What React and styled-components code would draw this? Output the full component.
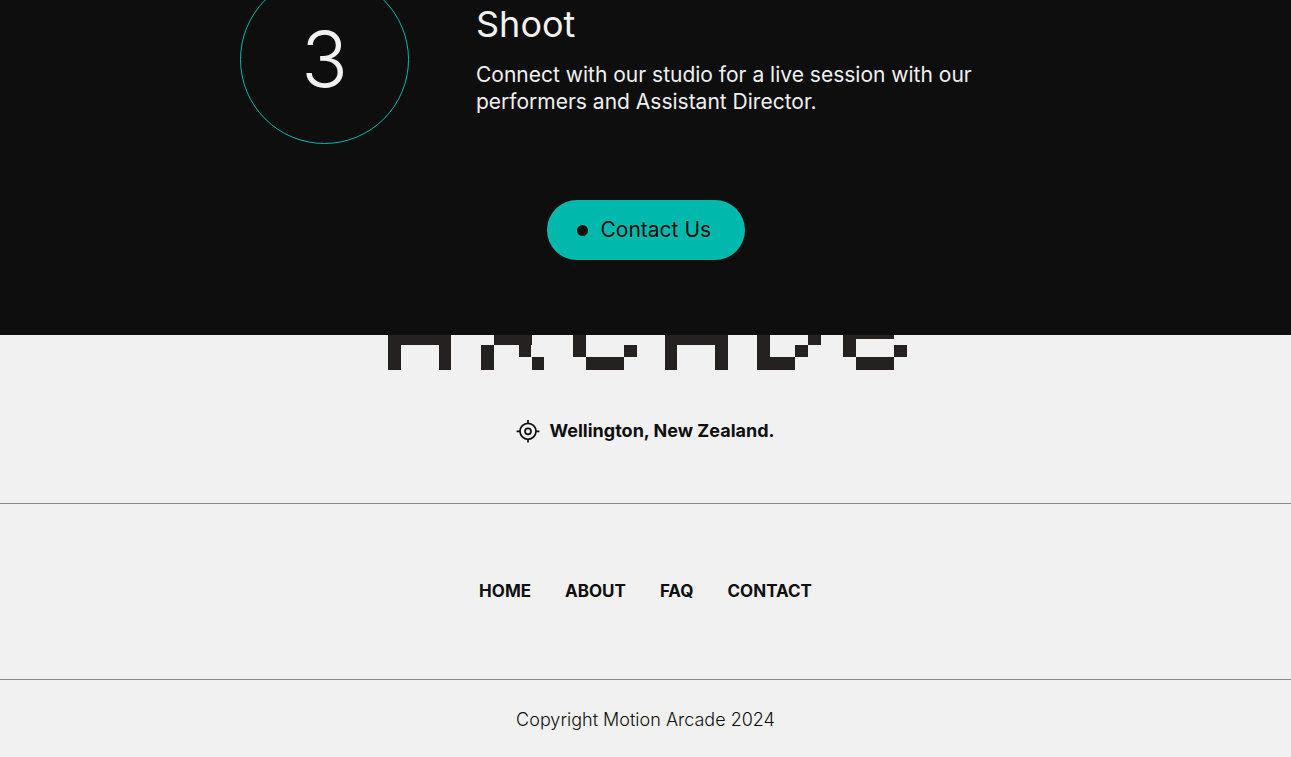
import React from "react";
import styled, { createGlobalStyle } from "styled-components";

const GlobalStyle = createGlobalStyle`
  *, *::before, *::after { box-sizing: border-box; }
  body {
    margin: 0;
    background: #f1f1f1;
    color: #0e0e0e;
    font-family: Inter, "Liberation Sans", sans-serif;
  }
`;

const Process = styled.section`
  background: #0e0e0e;
  color: #f1f1f1;
  padding: 0 24px 75px;
  display: flex;
  flex-direction: column;
  align-items: center;
  gap: 56px;
`;

const Step = styled.article`
  display: flex;
  align-items: center;
  gap: 67px;
  width: 100%;
  max-width: 811px;
  margin-top: -25px;
`;

const StepNumber = styled.div`
  flex: none;
  display: grid;
  place-items: center;
  width: 169px;
  height: 169px;
  border: 1px solid #00b8ac;
  border-radius: 50%;
  font-size: 77px;
  font-weight: 300;
  line-height: 1;
`;

const StepBody = styled.div`
  flex: 1;
  max-width: 520px;
  padding-bottom: 2px;
`;

const StepTitle = styled.h2`
  margin: 0 0 16px;
  font-size: 36px;
  font-weight: 400;
  line-height: 42px;
`;

const StepText = styled.p`
  margin: 0;
  font-size: 21px;
  line-height: 27px;
`;

const ContactButton = styled.button`
  display: flex;
  align-items: center;
  gap: 13px;
  min-width: 198px;
  height: 60px;
  padding: 0 30px;
  border: 0;
  border-radius: 30px;
  background: #00b8ac;
  color: #0e0e0e;
  font: 400 21px/28px Inter, "Liberation Sans", sans-serif;
  cursor: pointer;
`;

const Dot = styled.span`
  width: 11px;
  height: 11px;
  border-radius: 50%;
  background: #0e0e0e;
`;

const FooterRow = styled.div`
  display: flex;
  flex-direction: column;
  align-items: center;
  padding: ${(p) => p.$padding};
  border-bottom: ${(p) => (p.$last ? "0" : "1px solid #8a8a8a")};
`;

const Wordmark = styled.svg`
  display: block;
  width: 525px;
  height: 35px;
  fill: #252120;
  shape-rendering: crispEdges;
`;

const Location = styled.p`
  display: flex;
  align-items: center;
  gap: 9px;
  margin: 48px 0 0;
  font-size: 18px;
  font-weight: 700;
  line-height: 26px;
`;

const Nav = styled.nav`
  display: flex;
  gap: 34px;
`;

const NavLink = styled.a`
  color: inherit;
  text-decoration: none;
  font-size: 17px;
  font-weight: 700;
  line-height: 26px;
`;

const Copyright = styled.p`
  margin: 0;
  font-size: 18px;
  font-weight: 300;
  line-height: 26px;
`;

// Visible blocks of the pixel wordmark: x, y, width, height
const BLOCKS = [
  [5.4, 0, 63, 9.6], [5.4, 0, 12.6, 35], [55.8, 0, 12.6, 35],
  [110.8, 0, 37.8, 9.6], [98.2, 9.6, 12.6, 25.4], [135.8, 0, 12.6, 22.3], [148.6, 22.3, 12.6, 12.7],
  [190.4, 0, 12.6, 22.3], [203, 22.3, 38, 12.7], [241, 9.6, 12.6, 12.7],
  [281.8, 0, 63, 9.6], [281.8, 0, 12.6, 35], [332.4, 0, 12.6, 35],
  [374.4, 0, 12.6, 35], [387, 22.3, 25.4, 12.7], [412.4, 9.6, 12.6, 12.7], [425, 0, 12.6, 9.6],
  [460.4, 0, 12.6, 22.3], [473, 0, 38, 3.6], [473, 22.3, 38, 12.7], [511, 9.6, 12.6, 12.7],
];

const LINKS = ["Home", "About", "FAQ", "Contact"];

const TargetIcon = () => (
  <svg width="24" height="24" viewBox="0 0 24 24" fill="none" stroke="#0e0e0e" strokeWidth="1.7" aria-hidden="true">
    <circle cx="12" cy="12.3" r="8" />
    <circle cx="12" cy="12.3" r="3" />
    <path d="M12 1V4.3M12 20.3v3.3M.6 12.3H4M20 12.3h3.4" />
  </svg>
);

export default function App() {
  return (
    <>
      <GlobalStyle />
      <main>
        <Process>
          <Step>
            <StepNumber>3</StepNumber>
            <StepBody>
              <StepTitle>Shoot</StepTitle>
              <StepText>
                Connect with our studio for a live session with our performers and Assistant Director.
              </StepText>
            </StepBody>
          </Step>
          <ContactButton type="button">
            <Dot />
            Contact Us
          </ContactButton>
        </Process>
      </main>
      <footer>
        <FooterRow $padding="0 24px 59px">
          <Wordmark viewBox="0 0 525 35" role="img" aria-label="Arcade">
            {BLOCKS.map(([x, y, width, height]) => (
              <rect key={`${x}-${y}-${width}`} x={x} y={y} width={width} height={height} />
            ))}
          </Wordmark>
          <Location>
            <TargetIcon />
            Wellington, New Zealand.
          </Location>
        </FooterRow>
        <FooterRow $padding="74px 24px 75px">
          <Nav aria-label="Footer">
            {LINKS.map((label) => (
              <NavLink key={label} href={`#${label.toLowerCase()}`}>
                {label.toUpperCase()}
              </NavLink>
            ))}
          </Nav>
        </FooterRow>
        <FooterRow $padding="27px 24px 24px" $last>
          <Copyright>Copyright Motion Arcade 2024</Copyright>
        </FooterRow>
      </footer>
    </>
  );
}
